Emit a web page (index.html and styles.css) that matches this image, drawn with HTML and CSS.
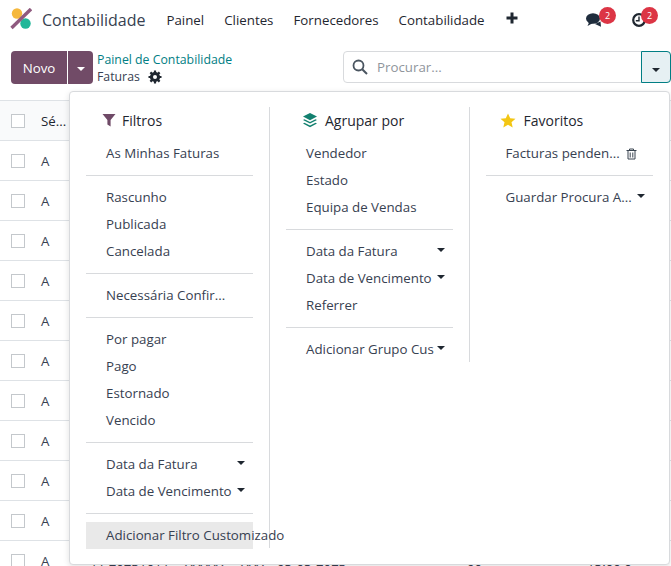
FILE: index.html
```html
<!DOCTYPE html>
<html>
<head>
    <meta charset="UTF-8">
    <title>Contabilidade</title>
    <link rel="stylesheet" href="styles.css">
</head>
<body>
    <nav class="navbar">
        <svg class="logo" width="22" height="22" viewBox="0 0 22 22">
            <circle cx="7" cy="5.5" r="5.2" fill="#f5b83d"/>
            <circle cx="15.5" cy="15.5" r="5.2" fill="#21b799"/>
            <path d="M21 1 L1.5 20" stroke="#8f5a7f" stroke-width="3.4"/>
        </svg>
        <span class="app-name">Contabilidade</span>
        <a class="nav-link">Painel</a>
        <a class="nav-link">Clientes</a>
        <a class="nav-link">Fornecedores</a>
        <a class="nav-link">Contabilidade</a>
        <svg class="plus" width="12" height="12" viewBox="0 0 12 12"><path d="M6 0.5 V11.5 M0.5 6 H11.5" stroke="#1f2730" stroke-width="3"/></svg>
        <div class="systray">
            <div class="tray-item">
                <svg width="18" height="14" viewBox="0 0 18 14">
                    <ellipse cx="7" cy="5.5" rx="7" ry="5.2" fill="#1f2d3d"/>
                    <path d="M1.5 13 L3.5 8.5 L7 10 Z" fill="#1f2d3d"/>
                    <path d="M9 11 L14.5 8.5 L15 13.8 Z" fill="#1f2d3d"/>
                </svg>
                <span class="badge">2</span>
            </div>
            <div class="tray-item">
                <svg width="14" height="14" viewBox="0 0 14 14">
                    <circle cx="7" cy="7" r="5.8" fill="none" stroke="#1f2730" stroke-width="2.2"/>
                    <path d="M7 3.5 V7.8 H3.8" fill="none" stroke="#1f2730" stroke-width="1.4"/>
                </svg>
                <span class="badge">2</span>
            </div>
        </div>
    </nav>

    <div class="control-panel">
        <div class="btn-group">
            <button class="btn-new">Novo</button>
            <button class="btn-caret"><i class="caret caret-white"></i></button>
        </div>
        <div class="breadcrumb">
            <a>Painel de Contabilidade</a>
            <div class="current">Faturas
                <svg width="14" height="14" viewBox="0 0 14 14">
                    <circle cx="7" cy="7" r="3.6" fill="none" stroke="#1f2730" stroke-width="3"/>
                    <path d="M7 0.5 V13.5 M0.5 7 H13.5 M2.4 2.4 L11.6 11.6 M11.6 2.4 L2.4 11.6" stroke="#1f2730" stroke-width="2.2"/>
                    <circle cx="7" cy="7" r="2" fill="#fff"/>
                </svg>
            </div>
        </div>
        <div class="search">
            <svg width="16" height="16" viewBox="0 0 16 16"><circle cx="6.5" cy="6.5" r="5" fill="none" stroke="#4a5560" stroke-width="1.8"/><path d="M10.2 10.2 L15 15" stroke="#4a5560" stroke-width="2"/></svg>
            <span class="placeholder">Procurar...</span>
            <button class="search-toggle"><i class="caret"></i></button>
        </div>
    </div>

    <div class="list">
        <div class="list-row list-head"><span class="check"></span><span>Sé...</span></div>
        <div class="list-row"><span class="check"></span><span>A</span></div>
        <div class="list-row"><span class="check"></span><span>A</span></div>
        <div class="list-row"><span class="check"></span><span>A</span></div>
        <div class="list-row"><span class="check"></span><span>A</span></div>
        <div class="list-row"><span class="check"></span><span>A</span></div>
        <div class="list-row"><span class="check"></span><span>A</span></div>
        <div class="list-row"><span class="check"></span><span>A</span></div>
        <div class="list-row"><span class="check"></span><span>A</span></div>
        <div class="list-row"><span class="check"></span><span>A</span></div>
        <div class="list-row"><span class="check"></span><span>A</span></div>
        <div class="list-row last-row">
            <span class="check"></span><span>A</span>
            <span>11 20231011</span><span>XXXXX</span><span>XXX</span><span>05-05-2023</span><span>00</span><span>15:00 0</span>
        </div>
    </div>

    <div class="dropdown">
        <div class="col">
            <div class="col-title">
                <svg class="filter-icon" width="14" height="14" viewBox="0 0 14 14"><path d="M0.5 1 H13.5 L8.6 7 V13.5 L5.4 11.5 V7 Z" fill="#6f4a67"/></svg>
                Filtros
            </div>
            <a class="item">As Minhas Faturas</a>
            <hr>
            <a class="item">Rascunho</a>
            <a class="item">Publicada</a>
            <a class="item">Cancelada</a>
            <hr>
            <a class="item">Necessária Confir...</a>
            <hr>
            <a class="item">Por pagar</a>
            <a class="item">Pago</a>
            <a class="item">Estornado</a>
            <a class="item">Vencido</a>
            <hr>
            <a class="item has-caret">Data da Fatura <i class="caret"></i></a>
            <a class="item has-caret">Data de Vencimento <i class="caret"></i></a>
            <hr>
            <a class="item active">Adicionar Filtro Customizado</a>
        </div>
        <div class="col">
            <div class="col-title">
                <svg width="16" height="16" viewBox="0 0 16 16">
                    <path d="M8 1 L15 4.6 L8 8.2 L1 4.6 Z" fill="#12806f"/>
                    <path d="M2.5 7.2 L1 8 L8 11.6 L15 8 L13.5 7.2 L8 10 Z" fill="#12806f"/>
                    <path d="M2.5 10.8 L1 11.6 L8 15.2 L15 11.6 L13.5 10.8 L8 13.6 Z" fill="#12806f"/>
                </svg>
                Agrupar por
            </div>
            <a class="item">Vendedor</a>
            <a class="item">Estado</a>
            <a class="item">Equipa de Vendas</a>
            <hr>
            <a class="item has-caret">Data da Fatura <i class="caret"></i></a>
            <a class="item has-caret">Data de Vencimento <i class="caret"></i></a>
            <a class="item">Referrer</a>
            <hr>
            <a class="item has-caret">Adicionar Grupo Cus <i class="caret"></i></a>
        </div>
        <div class="col col-last">
            <div class="col-title">
                <svg class="star" width="16" height="15" viewBox="0 0 16 15"><path d="M8 0.5 L10.2 5.3 L15.5 5.8 L11.5 9.3 L12.7 14.5 L8 11.8 L3.3 14.5 L4.5 9.3 L0.5 5.8 L5.8 5.3 Z" fill="#f3c614"/></svg>
                Favoritos
            </div>
            <a class="item fav-item">Facturas penden...
                <svg width="11" height="12" viewBox="0 0 11 12"><path d="M0.5 2.5 H10.5 M3.5 2.5 V1 H7.5 V2.5 M2 2.5 V11 H9 V2.5 M4.2 4.5 V9.5 M6.8 4.5 V9.5" fill="none" stroke="#3a4550" stroke-width="1"/></svg>
            </a>
            <hr>
            <a class="item has-caret">Guardar Procura A... <i class="caret"></i></a>
        </div>
    </div>
</body>
</html>
```

FILE: styles.css
```css
body {
    font-family: "Open Sans", "Noto Sans", sans-serif;
    font-size: 13.3px;
    color: #374151;
    background: white;
    margin: 0;
    height: 566px;
    overflow: hidden;
    position: relative;
}
svg { flex: none; }

.navbar {
    display: flex;
    align-items: center;
    height: 40px;
    padding-left: 10px;
}
.logo { margin-top: -2px; }
.app-name {
    font-size: 16px;
    margin: 0 21px 0 10px;
    color: #374151;
}
.nav-link {
    margin-right: 20px;
    color: #1f2730;
}
.plus { margin: -4px 0 0 1px; }
.systray {
    display: flex;
    margin-left: auto;
    gap: 28px;
    padding-right: 25px;
}
.tray-item {
    position: relative;
    display: flex;
}
.badge {
    position: absolute;
    top: -6px;
    right: -12px;
    width: 17px;
    height: 17px;
    border-radius: 50%;
    background: #dc3545;
    color: white;
    font-size: 9px;
    line-height: 17px;
    text-align: center;
}

.control-panel {
    display: flex;
    height: 61px;
    padding: 11px 0 0 11px;
    box-sizing: border-box;
    border-bottom: 1px solid #dee2e6;
}
.btn-group { display: flex; height: 33px; }
.btn-new, .btn-caret {
    border: none;
    background: #714b67;
    color: white;
    font-family: inherit;
    font-size: 13.3px;
    height: 33px;
}
.btn-new {
    width: 56px;
    border-radius: 4px 0 0 4px;
    margin-right: 1px;
}
.btn-caret {
    width: 25px;
    border-radius: 0 4px 4px 0;
    padding: 0;
}
.caret {
    display: inline-block;
    border-top: 4px solid #1f2730;
    border-left: 4px solid transparent;
    border-right: 4px solid transparent;
}
.caret-white { border-top-color: white; vertical-align: middle; }
.breadcrumb {
    margin-left: 4px;
    font-size: 12.3px;
    line-height: 17px;
    color: #374151;
}
.breadcrumb a { color: #017e84; }
.current { display: flex; align-items: center; gap: 8px; }
.search {
    display: flex;
    align-items: center;
    box-sizing: border-box;
    width: 328px;
    height: 32px;
    margin-left: auto;
    border: 1px solid #d8dadd;
    border-radius: 4px;
    padding-left: 8px;
    position: relative;
}
.placeholder { color: #8f959c; margin-left: 9px; }
.search-toggle {
    position: absolute;
    top: -1px;
    right: -1px;
    width: 30px;
    height: 32px;
    padding: 0;
    background: #e6f0f3;
    border: 1px solid #017e84;
    border-radius: 0 4px 4px 0;
}

.list-row {
    display: flex;
    align-items: center;
    box-sizing: border-box;
    height: 40px;
    padding-left: 11px;
    gap: 16px;
    border-bottom: 1px solid #dee2e6;
}
.list-head { background: #f9fafb; color: #1f2730; }
.last-row {
    display: grid;
    grid-template-columns: 30px 49px 95px 56px 36px 190px 120px auto;
    gap: 0;
    white-space: nowrap;
}
.check {
    box-sizing: border-box;
    width: 14px;
    height: 14px;
    border: 1px solid #c4c8cc;
    background: white;
}

.dropdown {
    position: absolute;
    left: 69px;
    top: 91px;
    width: 601px;
    height: 474px;
    box-sizing: border-box;
    display: flex;
    padding-top: 15px;
    background: white;
    border: 1px solid #d8dadd;
    border-radius: 4px;
    box-shadow: 0 2px 6px rgba(0,0,0,0.12);
}
.col {
    box-sizing: border-box;
    width: 200px;
    padding: 0 16px;
    border-right: 1px solid #d8dadd;
    height: 441px;
}
.col:nth-child(2) { height: 255px; }
.col-last { border-right: none; }
.col-title {
    display: flex;
    align-items: center;
    gap: 7px;
    height: 26px;
    padding-left: 16px;
    font-size: 14px;
    color: #1f2730;
}
.filter-icon { margin-right: -1px; }
.star { margin: 0 1px 0 -2px; }
.item {
    display: block;
    height: 27px;
    line-height: 27px;
    padding-left: 20px;
    white-space: nowrap;
    color: #374151;
}
.col-title + .item { margin-top: 7px; }
.has-caret {
    display: flex;
    align-items: center;
    justify-content: space-between;
    padding-right: 8px;
}
.has-caret .caret { margin-top: -3px; }
.fav-item {
    display: flex;
    align-items: center;
    gap: 6px;
}
.active { background: #e9e9e9; }
hr {
    border: none;
    border-top: 1px solid #d8dadd;
    margin: 8px 0;
}
```
